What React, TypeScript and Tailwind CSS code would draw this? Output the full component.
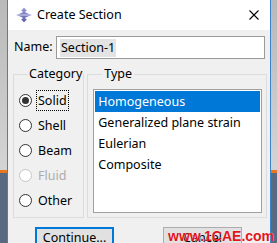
const categories = [
  { label: "Solid", checked: true, disabled: false },
  { label: "Shell", checked: false, disabled: false },
  { label: "Beam", checked: false, disabled: false },
  { label: "Fluid", checked: false, disabled: true },
  { label: "Other", checked: false, disabled: false },
];

const types = ["Homogeneous", "Generalized plane strain", "Eulerian", "Composite"];

function Strip({ className }: { className: string }) {
  return (
    <div className={`flex shrink-0 flex-col ${className}`}>
      <div className="h-[170px] shrink-0 bg-gradient-to-b from-[#b9b9b9] to-[#d4d4d4]" />
      <div className="h-[3px] shrink-0 bg-[#e8781e]" />
      <div className="flex-1 bg-[#586a81]" />
    </div>
  );
}

function AppIcon() {
  return (
    <svg width="16" height="16" viewBox="0 0 16 16">
      <defs>
        <linearGradient id="ic" x1="0" y1="0" x2="0" y2="1">
          <stop offset="0" stopColor="#9a9ad6" />
          <stop offset="1" stopColor="#5d5fa8" />
        </linearGradient>
      </defs>
      <path d="M8 0.5 L11 4 L9.5 4 L9.5 5.5 L15.5 8 L9.5 10.5 L9.5 12 L11 12 L8 15.5 L5 12 L6.5 12 L6.5 10.5 L0.5 8 L6.5 5.5 L6.5 4 L5 4 Z" fill="url(#ic)" />
      <path d="M0.5 8 L15.5 8" stroke="#d8d8f0" strokeWidth="1" />
    </svg>
  );
}

function Radio({ checked, disabled }: { checked: boolean; disabled: boolean }) {
  return (
    <span
      className={`flex h-[13px] w-[13px] shrink-0 items-center justify-center rounded-full border bg-white ${
        disabled ? "border-[#c4c4c4]" : "border-[#333333]"
      }`}
    >
      {checked && <span className="h-[7px] w-[7px] rounded-full bg-[#333333]" />}
    </span>
  );
}

export default function App() {
  return (
    <div className="relative flex h-[243px] w-[277px] overflow-hidden font-['Noto_Sans',sans-serif] text-[12.5px] text-black">
      <Strip className="w-[7px]" />

      <div className="w-[264px] shrink-0 border-x border-[#3a84c9] bg-[#f0f0f0]">
        {/* Title bar */}
        <div className="flex h-[30px] items-center bg-white pl-[8px] pr-[11px]">
          <AppIcon />
          <span className="ml-[5px] flex-1">Create Section</span>
          <svg width="10" height="10" viewBox="0 0 10 10">
            <path d="M0.5 0.5 L9.5 9.5 M9.5 0.5 L0.5 9.5" stroke="#000" strokeWidth="1.1" />
          </svg>
        </div>

        {/* Name */}
        <div className="mt-[6px] flex items-center pl-[6px]">
          <span className="w-[42px]">Name:</span>
          <div className="flex h-[23px] w-[209px] items-center border border-[#9a9a9a] bg-white pl-[3px]">
            <span className="bg-[#e3e3e3] px-[1px] leading-[18px]">Section-1</span>
          </div>
        </div>

        {/* Groups */}
        <div className="mt-[7px] flex gap-[3px] pl-[5px]">
          <fieldset className="h-[152px] w-[69px] border border-[#dcdcdc] pl-[5px] pt-[6px]">
            <legend className="ml-[9px] px-[1px] leading-[16px]">Category</legend>
            {categories.map((c) => (
              <div key={c.label} className="flex h-[25px] items-center gap-[4px]">
                <Radio checked={c.checked} disabled={c.disabled} />
                <span
                  className={`border px-[1px] leading-[19px] ${
                    c.checked ? "border-dotted border-black" : "border-transparent"
                  } ${c.disabled ? "text-[#acacac]" : ""}`}
                >
                  {c.label}
                </span>
              </div>
            ))}
          </fieldset>

          <fieldset className="h-[152px] w-[180px] border border-[#dcdcdc] pl-[5px] pt-[7px]">
            <legend className="ml-[9px] px-[2px] leading-[16px]">Type</legend>
            <div className="h-[124px] w-[169px] border border-[#a0a0a0] bg-white p-[1px]">
              {types.map((t, i) => (
                <div
                  key={t}
                  className={`h-[21px] pl-[3px] leading-[21px] ${i === 0 ? "bg-[#0078d7] text-white" : ""}`}
                >
                  {t}
                </div>
              ))}
            </div>
          </fieldset>
        </div>

        {/* Buttons */}
        <div className="mt-[9px] flex gap-[49px] pl-[27px]">
          <button className="flex h-[23px] w-[79px] shrink-0 items-center justify-center border-2 border-[#0078d7] bg-[#e1e1e1]">
            Continue...
          </button>
          <button className="flex h-[23px] w-[79px] shrink-0 items-center justify-center border border-[#adadad] bg-[#e1e1e1]">
            Cancel
          </button>
        </div>
      </div>

      <Strip className="w-[6px]" />

      {/* watermark */}
      <span className="absolute left-[168px] top-[228px] font-['Liberation_Sans',sans-serif] text-[14px] font-bold leading-[16px] text-[#e0161c] [text-shadow:0_0_1px_#fff]">
        www.1CAE.com
      </span>
    </div>
  );
}
